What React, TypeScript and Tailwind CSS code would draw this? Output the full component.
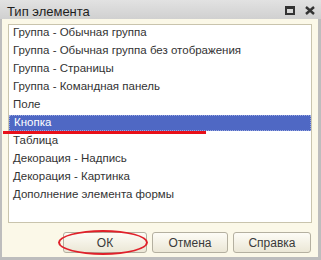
import React from "react";

const items = [
  "Группа - Обычная группа",
  "Группа - Обычная группа без отображения",
  "Группа - Страницы",
  "Группа - Командная панель",
  "Поле",
  "Кнопка",
  "Таблица",
  "Декорация - Надпись",
  "Декорация - Картинка",
  "Дополнение элемента формы",
];

const selected = 5;

const Btn = ({ label, w }: { label: string; w: string }) => (
  <button
    className={`${w} h-[21px] rounded-[3px] border border-[#b4b0a0] bg-gradient-to-b from-[#fdfcf6] to-[#ebe7d6] text-[12px] text-[#3a3a3a] flex items-center justify-center`}
  >
    {label}
  </button>
);

export default function App() {
  return (
    <div
      className="relative w-[321px] h-[260px] bg-[#bdbdbd] pl-[2px] pr-[3px] pb-[3px] flex flex-col"
      style={{ fontFamily: '"Liberation Sans", Arial, sans-serif' }}
    >
      {/* title bar */}
      <div className="h-[19px] -ml-[2px] -mr-[3px] pl-[7px] pr-[6px] bg-gradient-to-b from-[#e2e2e2] to-[#d0d0d0] flex items-center justify-between">
        <span className="text-[13px] text-[#1e1e1e] leading-none pt-[3px]">Тип элемента</span>
        <div className="flex items-center gap-[10px] pt-[2px]">
          <div className="w-[10px] h-[9px] border-2 border-t-[3px] border-[#333]" />
          <svg width="10" height="9" viewBox="0 0 10 9">
            <path d="M1 1 L9 8 M9 1 L1 8" stroke="#333" strokeWidth="2.4" />
          </svg>
        </div>
      </div>

      {/* body */}
      <div className="flex-1 bg-[#fbf8e8] px-[6px] pt-[5px] flex flex-col">
        <div className="h-[199px] bg-white border border-[#c9c4ad] flex flex-col">
          {items.map((t, i) => (
            <div key={t} className="h-[18px] flex items-start">
              <div
                className={`h-[16px] w-full pl-[4px] flex items-center text-[11.5px] ${
                  i === selected
                    ? "bg-[#4f68c4] text-white border border-dotted border-[#9aa8e0]"
                    : "text-[#333]"
                }`}
              >
                {t}
              </div>
            </div>
          ))}
        </div>

        <div className="flex justify-end gap-[5px] pr-[1px] mt-[9px]">
          <Btn label="ОК" w="w-[84px]" />
          <Btn label="Отмена" w="w-[76px]" />
          <Btn label="Справка" w="w-[78px]" />
        </div>
      </div>

      {/* annotations */}
      <div className="absolute left-[3px] top-[131px] w-[203px] h-[3px] bg-[#e8101a]" />
      <div className="absolute left-[58px] top-[230px] w-[90px] h-[25px] rounded-[50%] border-2 border-[#e0202a]" />
    </div>
  );
}
